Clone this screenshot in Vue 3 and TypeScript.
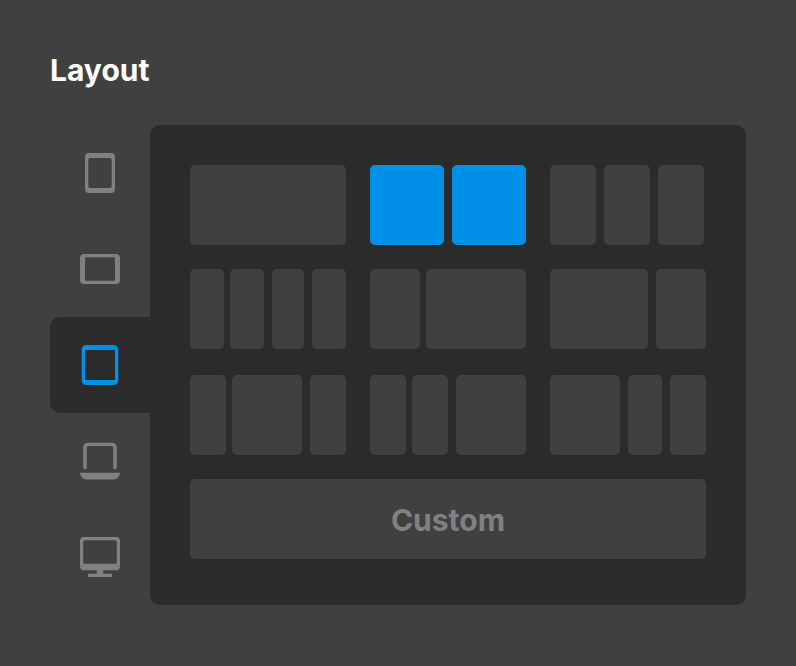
<script setup lang="ts">
import { ref } from 'vue'

interface Device {
  id: string
  label: string
  path: string
}

interface Preset {
  label: string
  columns: number[]
  variant?: 'tight' | 'inset'
}

const devices: Device[] = [
  {
    id: 'tablet-portrait',
    label: 'Tablet portrait',
    path: 'M9 0H31a4 4 0 0 1 4 4V36a4 4 0 0 1-4 4H9a4 4 0 0 1-4-4V4a4 4 0 0 1 4-4ZM10 5a1.7 1.7 0 0 0-1.7 1.7V33.3A1.7 1.7 0 0 0 10 35H30a1.7 1.7 0 0 0 1.7-1.7V6.7A1.7 1.7 0 0 0 30 5Z',
  },
  {
    id: 'tablet-landscape',
    label: 'Tablet landscape',
    path: 'M4 5H36a4 4 0 0 1 4 4V31a4 4 0 0 1-4 4H4a4 4 0 0 1-4-4V9a4 4 0 0 1 4-4ZM6.5 8.3A1.5 1.5 0 0 0 5 9.8V30.2a1.5 1.5 0 0 0 1.5 1.5H33.5a1.5 1.5 0 0 0 1.5-1.5V9.8a1.5 1.5 0 0 0-1.5-1.5Z',
  },
  {
    id: 'tablet-large',
    label: 'Large tablet',
    path: 'M6.2 0H33.8a4.5 4.5 0 0 1 4.5 4.5V35.5a4.5 4.5 0 0 1-4.5 4.5H6.2a4.5 4.5 0 0 1-4.5-4.5V4.5a4.5 4.5 0 0 1 4.5-4.5ZM6 5a1 1 0 0 0-1 1V34a1 1 0 0 0 1 1H34a1 1 0 0 0 1-1V6a1 1 0 0 0-1-1Z',
  },
  {
    id: 'laptop',
    label: 'Laptop',
    path: 'M3.3 28V6.2a4.5 4.5 0 0 1 4.5-4.5H32.2a4.5 4.5 0 0 1 4.5 4.5V28H33.3V6.5a1.5 1.5 0 0 0-1.5-1.5H8.2a1.5 1.5 0 0 0-1.5 1.5V28ZM0 31.7H40a6.7 6.7 0 0 1-6.7 6.7H6.7A6.7 6.7 0 0 1 0 31.7Z',
  },
  {
    id: 'desktop',
    label: 'Desktop',
    path: 'M4 0H36a4 4 0 0 1 4 4V29.3a4 4 0 0 1-4 4H23.3V36.7H32V40H8V36.7H16.7V33.3H4a4 4 0 0 1-4-4V4a4 4 0 0 1 4-4ZM4.8 3.3a1.5 1.5 0 0 0-1.5 1.5V25.2a1.5 1.5 0 0 0 1.5 1.5H35.2a1.5 1.5 0 0 0 1.5-1.5V4.8a1.5 1.5 0 0 0-1.5-1.5Z',
  },
]

const presets: Preset[] = [
  { label: 'One column', columns: [156] },
  { label: 'Two equal columns', columns: [74, 74] },
  { label: 'Three equal columns', columns: [46, 46, 46], variant: 'inset' },
  { label: 'Four columns', columns: [34, 34, 32, 34], variant: 'tight' },
  { label: 'Narrow and wide', columns: [50, 100], variant: 'tight' },
  { label: 'Wide and narrow', columns: [98, 50] },
  { label: 'Wide centre', columns: [36, 70, 36], variant: 'tight' },
  { label: 'Wide right', columns: [36, 36, 70], variant: 'tight' },
  { label: 'Wide left', columns: [70, 34, 36] },
]

const activeDevice = ref('tablet-large')
const activePreset = ref(1)
</script>

<template>
  <main class="page">
    <h1 class="title">Layout</h1>
    <div class="picker">
      <nav class="devices" aria-label="Device">
        <button
          v-for="device in devices"
          :key="device.id"
          type="button"
          class="device"
          :class="{ active: device.id === activeDevice }"
          :aria-label="device.label"
          :aria-pressed="device.id === activeDevice"
          @click="activeDevice = device.id"
        >
          <svg class="icon" viewBox="0 0 40 40" aria-hidden="true">
            <path :d="device.path" fill="currentColor" fill-rule="evenodd" />
          </svg>
        </button>
      </nav>
      <section class="panel" aria-label="Column layouts">
        <button
          v-for="(preset, index) in presets"
          :key="preset.label"
          type="button"
          class="preset"
          :class="[preset.variant, { selected: index === activePreset }]"
          :aria-label="preset.label"
          :aria-pressed="index === activePreset"
          @click="activePreset = index"
        >
          <span
            v-for="(width, column) in preset.columns"
            :key="column"
            class="column"
            :style="{ flexGrow: width }"
          ></span>
        </button>
        <button type="button" class="custom">Custom</button>
      </section>
    </div>
  </main>
</template>

<style>
body {
  background: #404040;
}
</style>

<style scoped>
.page {
  box-sizing: border-box;
  min-height: 100vh;
  padding: 50px 50px 60px;
  background: #404040;
  font-family: Inter, 'Liberation Sans', sans-serif;
}

.title {
  margin: 0 0 35px;
  color: #fff;
  font-size: 30px;
  font-weight: 700;
  line-height: 40px;
}

.picker {
  display: flex;
}

button {
  margin: 0;
  padding: 0;
  border: 0;
  background: none;
  font: inherit;
  cursor: pointer;
}

.devices {
  display: flex;
  flex: 0 0 100px;
  flex-direction: column;
}

.device {
  display: flex;
  flex: 1 0 96px;
  align-items: center;
  justify-content: center;
  border-radius: 10px 0 0 10px;
  color: #808080;
}

.device.active {
  background: #2b2b2b;
  color: #0090e7;
}

.icon {
  display: block;
  width: 40px;
  height: 40px;
}

.panel {
  display: grid;
  flex: 1;
  grid-template-rows: 80px 82px 80px 80px;
  grid-template-columns: repeat(3, minmax(0, 1fr));
  gap: 24px;
  align-items: start;
  padding: 40px 40px 46px;
  border-radius: 10px;
  background: #2b2b2b;
}

.preset {
  display: flex;
  gap: 8px;
  height: 80px;
}

.preset.inset {
  padding-right: 2px;
}

.preset.tight .column:first-child {
  margin-right: -2px;
}

.column {
  flex: 1 1 0;
  align-self: stretch;
  border-radius: 5px;
  background: #404040;
}

.selected .column {
  background: #0090e7;
}

.custom {
  grid-column: 1 / -1;
  height: 80px;
  padding-top: 2px;
  border-radius: 5px;
  background: #404040;
  color: #808080;
  font-size: 30px;
  font-weight: 700;
  line-height: 40px;
}
</style>
